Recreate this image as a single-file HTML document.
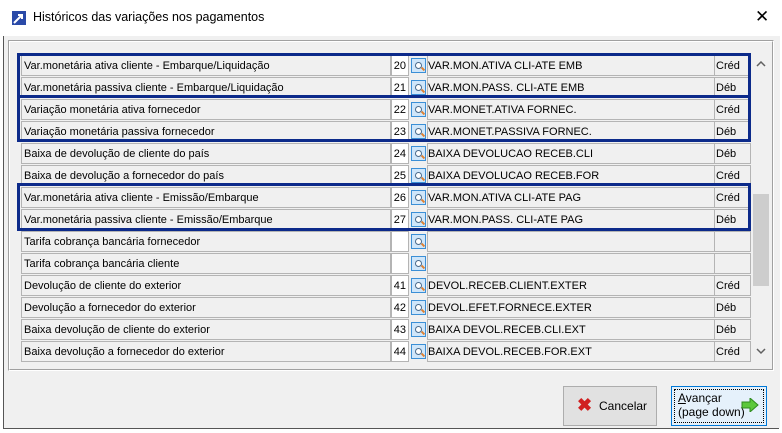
<!DOCTYPE html>
<html><head><style>
body{margin:0;width:782px;height:433px;background:#fff;font-family:"Liberation Sans",Tahoma,sans-serif;font-size:11px;position:relative;overflow:hidden}
.abs{position:absolute}
.cell{position:absolute;box-sizing:border-box;border:1px solid #b4b4b4;background:#f0f0f0;height:21px;line-height:20px;padding-left:2px;white-space:nowrap;overflow:hidden;color:#000}
.num{background:#fff;text-align:right;padding-right:2px;padding-left:0}
.ic{position:absolute;width:15px;height:15px;box-sizing:border-box;border:1px solid #3b8fd6;background:#cfe6fa}
.ic:after{content:"";position:absolute;left:3px;top:3px;width:5px;height:5px;border:1px solid #4a6a8a;border-radius:50%;background:#fff}
.ic:before{content:"";position:absolute;left:9px;top:9px;width:4px;height:2px;background:#e08030;transform:rotate(45deg)}
.box{position:absolute;border:3px solid #0c2a8a;box-sizing:border-box}
</style></head><body>
<div class="abs" style="left:0;top:0;width:782px;height:36px;background:#fff"></div>
<svg class="abs" style="left:12px;top:11px" width="14" height="14"><rect width="14" height="14" fill="#2a4aa8"/><path d="M2 12 L10 4 M6 4 H10 V8" stroke="#fff" stroke-width="2" fill="none"/></svg>
<div class="abs" style="left:33px;top:10px;font-size:12.5px">Históricos das variações nos pagamentos</div>
<div class="abs" style="left:755px;top:7px;font-size:17px;font-weight:300">✕</div>
<div class="abs" style="left:3px;top:36px;width:776px;height:392px;background:#f0f0f0;border-left:1px solid #555"></div>
<div class="abs" style="left:3px;top:428px;width:776px;height:1px;background:#555"></div>
<div class="abs" style="left:8px;top:40px;width:766px;height:331px;border:1px solid #a0a0a0;border-right-color:#fff;border-bottom-color:#fff;box-sizing:border-box"></div>
<div class="abs" style="left:9px;top:41px;width:764px;height:329px;border:1px solid #fff;border-right-color:#a0a0a0;border-bottom-color:#a0a0a0;box-sizing:border-box"></div>
<div id="rows"></div>
<div class="abs" style="left:753px;top:55px;width:17px;height:308px;background:#f0f0f0"></div>
<div class="abs" style="left:753px;top:194px;width:16px;height:92px;background:#cdcdcd"></div>
<svg class="abs" style="left:756px;top:61px" width="10" height="7"><path d="M1 5 L5 1 L9 5" stroke="#606060" stroke-width="1.5" fill="none"/></svg>
<svg class="abs" style="left:756px;top:348px" width="10" height="7"><path d="M1 1 L5 5 L9 1" stroke="#606060" stroke-width="1.5" fill="none"/></svg>
<div class="abs" style="left:563px;top:386px;width:94px;height:40px;box-sizing:border-box;border:1px solid #adadad;background:#e1e1e1"></div>
<div class="abs" style="left:577px;top:396px;color:#d02020;font-size:18px;font-weight:bold;line-height:18px">✖</div>
<div class="abs" style="left:599px;top:399px;font-size:12px">Cancelar</div>
<div class="abs" style="left:671px;top:386px;width:96px;height:40px;box-sizing:border-box;border:1px solid #0078d7;background:#e5f1fb"></div>
<div class="abs" style="left:674px;top:389px;width:90px;height:34px;box-sizing:border-box;border:1px dotted #000"></div>
<div class="abs" style="left:678px;top:391px;font-size:12px;line-height:14px"><u>A</u>vançar<br>(page down)</div>
<svg class="abs" style="left:741px;top:398px" width="18" height="14"><path d="M1 4 H9 V0 L17 7 L9 14 V10 H1 Z" fill="#5cc83c" stroke="#2e8a1e"/></svg>
<script>
var d=[["Var.monetária ativa cliente - Embarque/Liquidação","20","VAR.MON.ATIVA CLI-ATE EMB","Créd"],
["Var.monetária passiva cliente - Embarque/Liquidação","21","VAR.MON.PASS. CLI-ATE EMB","Déb"],
["Variação monetária ativa fornecedor","22","VAR.MONET.ATIVA FORNEC.","Créd"],
["Variação monetária passiva fornecedor","23","VAR.MONET.PASSIVA FORNEC.","Déb"],
["Baixa de devolução de cliente do país","24","BAIXA DEVOLUCAO RECEB.CLI","Déb"],
["Baixa de devolução a fornecedor do país","25","BAIXA DEVOLUCAO RECEB.FOR","Créd"],
["Var.monetária ativa cliente - Emissão/Embarque","26","VAR.MON.ATIVA CLI-ATE PAG","Créd"],
["Var.monetária passiva cliente - Emissão/Embarque","27","VAR.MON.PASS. CLI-ATE PAG","Déb"],
["Tarifa cobrança bancária fornecedor","","",""],
["Tarifa cobrança bancária cliente","","",""],
["Devolução de cliente do exterior","41","DEVOL.RECEB.CLIENT.EXTER","Créd"],
["Devolução a fornecedor do exterior","42","DEVOL.EFET.FORNECE.EXTER","Déb"],
["Baixa devolução de cliente do exterior","43","BAIXA DEVOL.RECEB.CLI.EXT","Déb"],
["Baixa devolução a fornecedor do exterior","44","BAIXA DEVOL.RECEB.FOR.EXT","Créd"]];
var h="";
d.forEach(function(r,i){var y=55+22*i;
h+='<div class="cell" style="left:21px;top:'+y+'px;width:370px">'+r[0]+'</div>';
h+='<div class="cell num" style="left:391px;top:'+y+'px;width:18px">'+r[1]+'</div>';
h+='<div class="ic" style="left:411px;top:'+(y+3)+'px"></div>';
h+='<div class="cell" style="left:427px;top:'+y+'px;width:288px;padding-left:0">'+r[2]+'</div>';
h+='<div class="cell" style="left:714px;top:'+y+'px;width:37px;padding-left:1px">'+r[3]+'</div>';});
h+='<div class="box" style="left:17px;top:53px;width:734px;height:45px"></div>';
h+='<div class="box" style="left:17px;top:95px;width:734px;height:47px"></div>';
h+='<div class="box" style="left:17px;top:183px;width:734px;height:48px"></div>';
document.getElementById("rows").innerHTML=h;
</script>
</body></html>
